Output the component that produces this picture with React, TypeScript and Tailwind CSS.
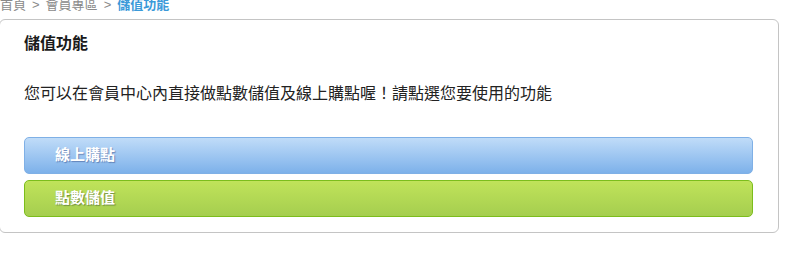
export default function App() {
  return (
    <div className="w-[810px] h-[265px] bg-white overflow-hidden font-['Liberation_Sans','Noto_Sans_CJK_TC',sans-serif]">
      {/* Breadcrumb */}
      <div className="-mt-[5px] h-[19px] flex items-center gap-[6px] text-[13px] text-[#8a8a8a] leading-none">
        <span>首頁</span>
        <span>&gt;</span>
        <span>會員專區</span>
        <span>&gt;</span>
        <span className="font-bold text-[#3b9ad9]">儲值功能</span>
      </div>

      {/* Card */}
      <div className="mt-[5px] -ml-[1px] w-[780px] h-[214px] border border-[#c4c4c4] rounded-[6px] pl-[24px] pr-[25px] pt-[14px]">
        <h1 className="text-[16px] font-bold text-[#1a1a1a] leading-[20px]">儲值功能</h1>
        <p className="mt-[29px] text-[16px] text-[#222] leading-[22px]">
          您可以在會員中心內直接做點數儲值及線上購點喔！請點選您要使用的功能
        </p>
        <div className="mt-[32px] flex flex-col gap-[6px]">
          <button className="h-[37px] w-full rounded-[5px] border border-[#7fb0e6] bg-gradient-to-b from-[#c0dcf8] to-[#7db1ea] text-left pl-[30px] text-[15px] font-bold text-white [text-shadow:1px_1px_1px_rgba(40,60,120,0.45)]">
            線上購點
          </button>
          <button className="h-[37px] w-full rounded-[5px] border border-[#7cbd1c] bg-gradient-to-b from-[#c0e35a] to-[#a5ce4f] text-left pl-[30px] text-[15px] font-bold text-white [text-shadow:1px_1px_1px_rgba(40,60,40,0.45)]">
            點數儲值
          </button>
        </div>
      </div>
    </div>
  );
}
